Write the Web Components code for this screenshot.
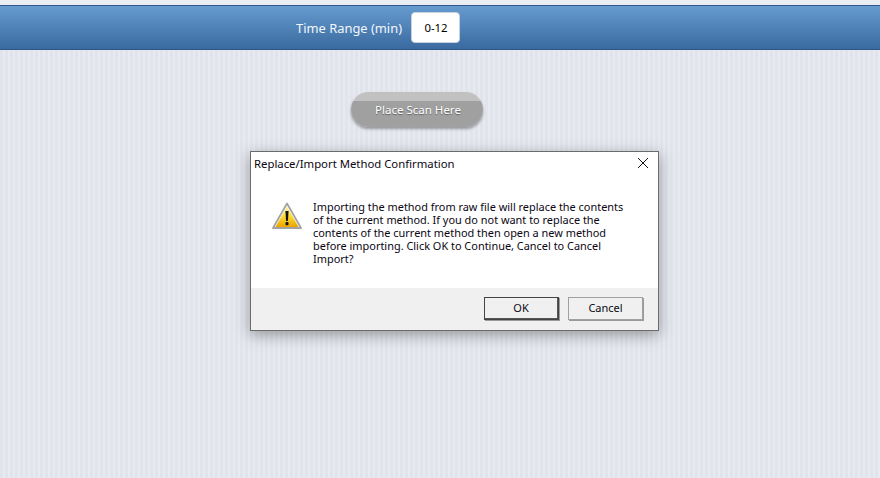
<!DOCTYPE html>
<html>
<head>
<meta charset="utf-8">
<style>
html, body { margin: 0; height: 100%; }
body { font-family: "Noto Sans", sans-serif; overflow: hidden; }
</style>
</head>
<body>
<method-page>
  <time-bar slot="bar" label="Time Range (min)" value="0-12"></time-bar>
  <scan-button>Place Scan Here</scan-button>
  <confirm-dialog slot="dialog" heading="Replace/Import Method Confirmation">
    Importing the method from raw file will replace the contents of the current method. If you do not want to replace the contents of the current method then open a new method before importing. Click OK to Continue, Cancel to Cancel Import?
  </confirm-dialog>
</method-page>
<script>
class MethodPage extends HTMLElement {
    constructor() {
        super();
        this.attachShadow({ mode: 'open' });
        this.shadowRoot.innerHTML = `
        <style>
        :host {
            display: flex;
            flex-direction: column;
            position: relative;
            height: 478px;
            padding-top: 5px;
            box-sizing: border-box;
            background: #e9ecf3;
        }
        .canvas {
            flex: 1;
            display: flex;
            flex-direction: column;
            align-items: flex-start;
            padding: 42px 0 0 351px;
            background: repeating-linear-gradient(90deg, #e1e4eb 0 3px, #e8eaf1 3px 5px);
        }
        </style>
        <slot name="bar"></slot>
        <div class="canvas"><slot></slot></div>
        <slot name="dialog"></slot>
        `;
    }
}

class TimeBar extends HTMLElement {
    constructor() {
        super();
        this.attachShadow({ mode: 'open' });
        this.shadowRoot.innerHTML = `
        <style>
        :host {
            display: flex;
            align-items: center;
            height: 45px;
            box-sizing: border-box;
            padding-left: 296px;
            gap: 9px;
            border-top: 1px solid #2d5788;
            border-bottom: 1px solid #2d5788;
            background: linear-gradient(#669bcf, #3a6a9f);
            color: #f2f6fb;
            font-size: 12.9px;
        }
        .value {
            width: 49px;
            height: 31px;
            box-sizing: border-box;
            padding-left: 1px;
            display: flex;
            align-items: center;
            justify-content: center;
            background: #fff;
            border: 1px solid #c9d2dc;
            border-radius: 4px;
            color: #000;
            font-size: 11.4px;
        }
        </style>
        <span class="label"></span>
        <span class="value"></span>
        `;
    }

    connectedCallback() {
        this.shadowRoot.querySelector('.label').textContent = this.getAttribute('label');
        this.shadowRoot.querySelector('.value').textContent = this.getAttribute('value');
    }
}

class ScanButton extends HTMLElement {
    constructor() {
        super();
        this.attachShadow({ mode: 'open' });
        this.shadowRoot.innerHTML = `
        <style>
        :host {
            display: flex;
            align-items: center;
            justify-content: center;
            width: 132px;
            height: 35px;
            box-sizing: border-box;
            padding-left: 2px;
            border-radius: 18px;
            background: linear-gradient(#c2c1c2 0 9px, #a0a0a0 9px);
            box-shadow: 0 2px 3px rgba(0,0,0,.35);
            color: #fff;
            font-size: 11.5px;
            text-shadow: 0 1px 1px rgba(0,0,0,.4);
        }
        </style>
        <slot></slot>
        `;
    }
}

class DialogButton extends HTMLElement {
    constructor() {
        super();
        this.attachShadow({ mode: 'open' });
        this.shadowRoot.innerHTML = `
        <style>
        :host {
            display: flex;
            align-items: center;
            justify-content: center;
            width: 75px;
            height: 23px;
            box-sizing: border-box;
            padding-bottom: 2px;
            background: #f0f0f0;
            border: 1px solid #fff;
            border-right-color: #6d6d6d;
            border-bottom-color: #6d6d6d;
            outline: 1px solid #a0a0a0;
            outline-offset: -1px;
            box-shadow: 1px 1px 0 #9a9a9a;
            color: #0a0a12;
            font-size: 11px;
        }
        :host([primary]) {
            padding-bottom: 0;
            outline: 1px solid #444;
            border-right: 2px solid #555;
            border-bottom: 2px solid #555;
        }
        </style>
        <slot></slot>
        `;
    }
}

class ConfirmDialog extends HTMLElement {
    constructor() {
        super();
        this.attachShadow({ mode: 'open' });
        this.shadowRoot.innerHTML = `
        <style>
        :host {
            position: absolute;
            left: 250px;
            top: 151px;
            width: 409px;
            height: 180px;
            box-sizing: border-box;
            display: flex;
            flex-direction: column;
            background: #fff;
            border: 1px solid #6b6b6b;
            box-shadow: 0 4px 14px rgba(0,0,0,.35);
            color: #0c0612;
            font-size: 10.93px;
        }
        .title {
            display: flex;
            align-items: center;
            justify-content: space-between;
            height: 24px;
            padding: 0 9px 2px 3px;
            box-sizing: border-box;
            font-size: 11.33px;
        }
        .body {
            flex: 1;
            display: flex;
            padding: 24px 30px 0 21px;
            gap: 11px;
        }
        .body svg { flex: none; margin-top: 2px; }
        .message { line-height: 13px; }
        .actions {
            display: flex;
            justify-content: flex-end;
            align-items: center;
            gap: 9px;
            height: 42px;
            padding-right: 15px;
            padding-bottom: 2px;
            box-sizing: border-box;
            background: #f0f0f0;
        }
        </style>
        <div class="title">
            <span class="heading"></span>
            <svg width="12" height="12" viewBox="0 0 12 12"><path d="M1 1 L11 11 M11 1 L1 11" stroke="#111" stroke-width="1" fill="none"/></svg>
        </div>
        <div class="body">
            <svg width="30" height="28" viewBox="0 0 30 28">
                <defs>
                    <linearGradient id="warn" x1="0" y1="0" x2="0" y2="1">
                        <stop offset="0" stop-color="#fff6b0"/>
                        <stop offset=".5" stop-color="#fcd92f"/>
                        <stop offset="1" stop-color="#eba400"/>
                    </linearGradient>
                </defs>
                <path d="M15 1.5 L29 26 H1 Z" fill="#fff" stroke="#a3a3a3" stroke-width="1.8" stroke-linejoin="round"/>
                <path d="M15 4.5 L26.6 25 H3.4 Z" fill="url(#warn)"/>
                <path d="M13.4 9 H16.6 L15.9 19 H14.1 Z" fill="#111"/>
                <rect x="13.5" y="20" width="3" height="3.2" rx="1" fill="#111"/>
            </svg>
            <div class="message"><slot></slot></div>
        </div>
        <div class="actions">
            <dialog-button primary>OK</dialog-button>
            <dialog-button>Cancel</dialog-button>
        </div>
        `;
    }

    connectedCallback() {
        this.shadowRoot.querySelector('.heading').textContent = this.getAttribute('heading');
    }
}

customElements.define('method-page', MethodPage);
customElements.define('time-bar', TimeBar);
customElements.define('scan-button', ScanButton);
customElements.define('dialog-button', DialogButton);
customElements.define('confirm-dialog', ConfirmDialog);
</script>
</body>
</html>
